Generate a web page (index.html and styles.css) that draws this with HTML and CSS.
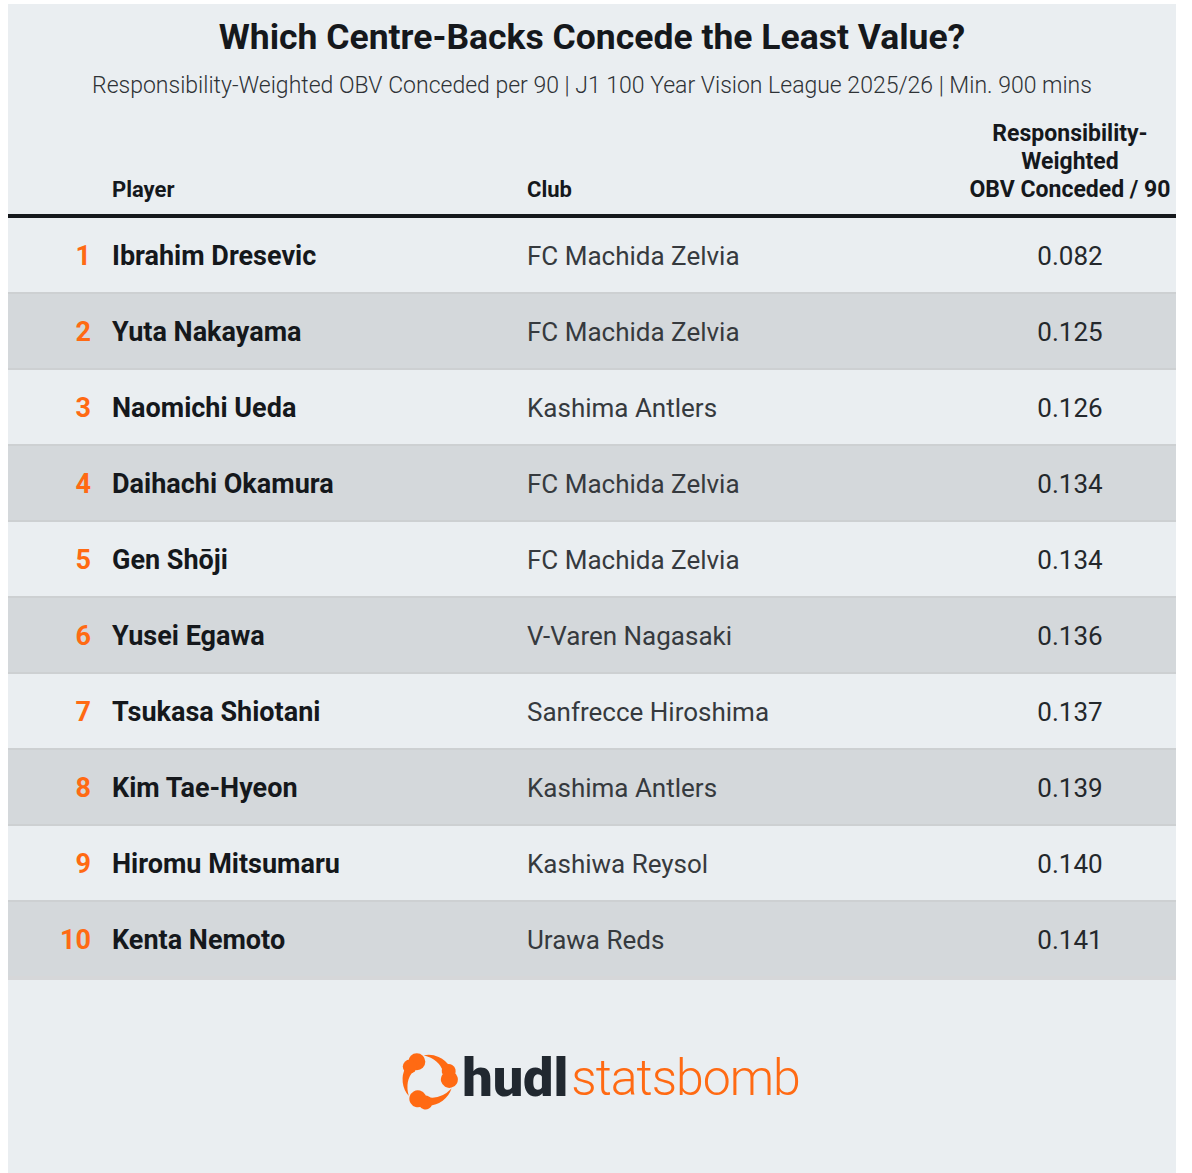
FILE: index.html
```html
<!DOCTYPE html>
<html lang="en">
<head>
<meta charset="utf-8">
<title>Which Centre-Backs Concede the Least Value?</title>
<link rel="stylesheet" href="styles.css">
</head>
<body>
<main class="panel">
  <header class="head">
    <h1 class="title">Which Centre-Backs Concede the Least Value?</h1>
    <p class="subtitle">Responsibility-Weighted OBV Conceded per 90 | J1 100 Year Vision League 2025/26 | Min. 900 mins</p>
  </header>

  <section class="table">
    <div class="row row-head">
      <span class="c-rank"></span>
      <span class="c-name">Player</span>
      <span class="c-club">Club</span>
      <span class="c-val">Responsibility-<br>Weighted<br>OBV Conceded / 90</span>
    </div>
    <div class="row odd"><span class="c-rank">1</span><span class="c-name">Ibrahim Dresevic</span><span class="c-club">FC Machida Zelvia</span><span class="c-val">0.082</span></div>
    <div class="row even"><span class="c-rank">2</span><span class="c-name">Yuta Nakayama</span><span class="c-club">FC Machida Zelvia</span><span class="c-val">0.125</span></div>
    <div class="row odd"><span class="c-rank">3</span><span class="c-name">Naomichi Ueda</span><span class="c-club">Kashima Antlers</span><span class="c-val">0.126</span></div>
    <div class="row even"><span class="c-rank">4</span><span class="c-name">Daihachi Okamura</span><span class="c-club">FC Machida Zelvia</span><span class="c-val">0.134</span></div>
    <div class="row odd"><span class="c-rank">5</span><span class="c-name">Gen Shōji</span><span class="c-club">FC Machida Zelvia</span><span class="c-val">0.134</span></div>
    <div class="row even"><span class="c-rank">6</span><span class="c-name">Yusei Egawa</span><span class="c-club">V-Varen Nagasaki</span><span class="c-val">0.136</span></div>
    <div class="row odd"><span class="c-rank">7</span><span class="c-name">Tsukasa Shiotani</span><span class="c-club">Sanfrecce Hiroshima</span><span class="c-val">0.137</span></div>
    <div class="row even"><span class="c-rank">8</span><span class="c-name">Kim Tae-Hyeon</span><span class="c-club">Kashima Antlers</span><span class="c-val">0.139</span></div>
    <div class="row odd"><span class="c-rank">9</span><span class="c-name">Hiromu Mitsumaru</span><span class="c-club">Kashiwa Reysol</span><span class="c-val">0.140</span></div>
    <div class="row even last"><span class="c-rank">10</span><span class="c-name">Kenta Nemoto</span><span class="c-club">Urawa Reds</span><span class="c-val">0.141</span></div>
  </section>

  <footer class="brand">
    <svg class="brand-icon" viewBox="0 0 64 64" width="64" height="64" aria-hidden="true">
      <defs>
        <g id="seg">
          <circle cx="20.8" cy="15.8" r="8.5"/>
          <circle cx="13.8" cy="20.6" r="7"/>
          <path d="M9.6 21.6 A25 25 0 0 0 12.8 50.1 Q8.5 34.5 17.5 24.9 Z"/>
        </g>
      </defs>
      <g fill="#ff6a13">
        <use href="#seg"/>
        <use href="#seg" transform="rotate(120 32 34)"/>
        <use href="#seg" transform="rotate(240 32 34)"/>
      </g>
    </svg>
    <span class="brand-hudl">hudl</span><span class="brand-sb">statsbomb</span>
  </footer>
</main>
</body>
</html>
```

FILE: styles.css
```css
html, body {
  background: #ffffff;
}
body {
  margin: 4px 8px 0 8px;
  font-family: Roboto, "Liberation Sans", sans-serif;
  color: #15181c;
}
.panel {
  width: 1168px;
  min-height: 1169px;
  background: #eaeef1;
  display: flex;
  flex-direction: column;
}
.head {
  text-align: center;
  padding-top: 12px;
}
.title {
  margin: 0;
  font-size: 35.5px;
  font-weight: 700;
  line-height: 42px;
  color: #15181c;
}
.subtitle {
  margin: 14px 0 0 0;
  font-size: 23px;
  font-weight: 300;
  line-height: 28px;
  color: #2e3236;
}
.table {
  margin-top: 20px;
}
.row {
  display: grid;
  grid-template-columns: 83px 394px 1fr 204px;
  column-gap: 21px;
  padding-right: 4px;
  align-items: center;
  height: 74px;
}
.row + .row {
  border-top: 2px solid #cdd0d2;
}
.row.last {
  border-bottom: 4px solid #d6d7d9;
}
.odd { background: #eaeef1; }
.even { background: #d4d8db; }
.row-head {
  height: auto;
  align-items: end;
  padding-bottom: 10px;
  border-bottom: 4px solid #15181c;
  font-size: 22px;
  font-weight: 700;
  line-height: 28px;
}
.row-head + .row {
  border-top: none;
}
.c-rank {
  text-align: right;
  color: #ff6a13;
  font-size: 27px;
  font-weight: 700;
  padding-top: 2px;
}
.row-head .c-rank { font-size: 22px; }
.c-name {
  font-size: 27px;
  font-weight: 700;
  color: #15181c;
  padding-top: 2px;
}
.c-club {
  font-size: 26px;
  font-weight: 400;
  color: #363a3e;
  padding-top: 2px;
}
.c-val {
  text-align: center;
  font-size: 26px;
  font-weight: 400;
  color: #24282c;
  padding-top: 2px;
}
.row-head .c-rank,
.row-head .c-name,
.row-head .c-club,
.row-head .c-val {
  padding-top: 0;
}
.row-head .c-name,
.row-head .c-club,
.row-head .c-val {
  font-size: 22px;
  font-weight: 700;
  color: #15181c;
}
.row-head .c-val {
  font-size: 23px;
}
.brand {
  display: flex;
  align-items: center;
  justify-content: center;
  margin-top: 66px;
  padding-left: 12px;
}
.brand-icon {
  flex: none;
}
.brand-hudl {
  margin-left: 2px;
  font-size: 54px;
  font-weight: 900;
  color: #212830;
  line-height: 60px;
}
.brand-sb {
  margin-left: 3px;
  font-size: 50px;
  font-weight: 300;
  color: #ff6a13;
  letter-spacing: -1px;
  line-height: 60px;
}
```
